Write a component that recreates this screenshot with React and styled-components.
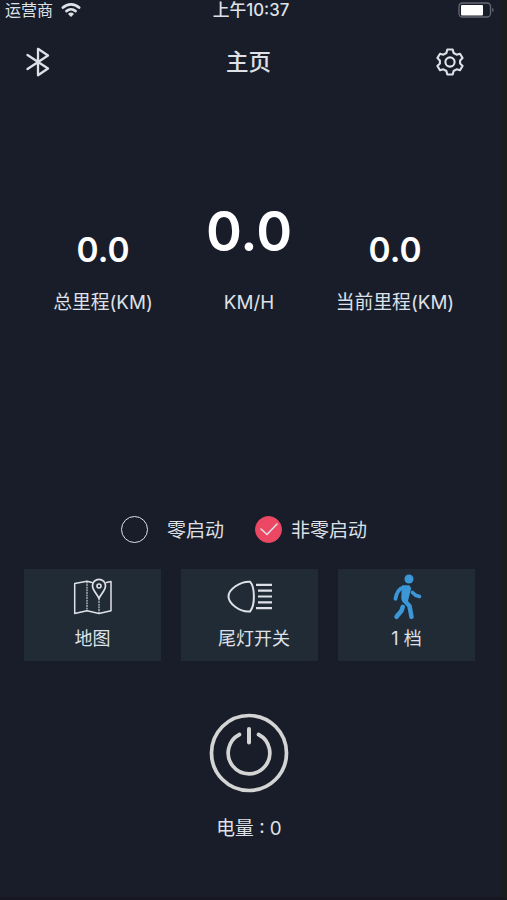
import React from "react";
import styled, { createGlobalStyle } from "styled-components";

const colors = {
  background: "#191d29",
  edge: "#1b1d1d",
  card: "#212b36",
  text: "#dfe1e8",
  white: "#ffffff",
  red: "#ec4863",
  blue: "#3b97d8",
};

const GlobalStyle = createGlobalStyle`
  * { box-sizing: border-box; }

  body {
    margin: 0;
    background-color: ${colors.background};
    color: ${colors.text};
    font-family: Inter, "Noto Sans CJK SC", sans-serif;
  }
`;

const Screen = styled.div`
  display: flex;
  flex-direction: column;
  width: 507px;
  height: 900px;
  overflow: hidden;
  border-right: 5px solid ${colors.edge};
  border-bottom: 3px solid #171623;

  svg {
    display: block;
    fill: none;
    stroke: ${colors.text};
    stroke-linecap: round;
    stroke-linejoin: round;
  }
`;

const StatusBar = styled.div`
  display: grid;
  grid-template-columns: 1fr auto 1fr;
  align-items: center;
  height: 20px;
  padding: 0 7px 0 5px;
  font-size: 16px;
  line-height: 20px;
`;

const Carrier = styled.div`
  display: flex;
  align-items: center;
  gap: 8px;
`;

const Time = styled.div`
  margin-right: -2px;
  font-size: 16.8px;
  font-weight: 500;
`;

const Battery = styled.div`
  justify-self: end;
`;

const Header = styled.header`
  display: grid;
  grid-template-columns: 1fr auto 1fr;
  align-items: center;
  height: 84px;
  padding: 0 38px 0 25px;
`;

const Title = styled.h1`
  margin: 0 -8px 0 0;
  font-size: 22.5px;
  font-weight: 500;
  line-height: 30px;
`;

const Settings = styled.div`
  justify-self: end;
`;

const Stats = styled.section`
  display: grid;
  grid-template-columns: 146px 146px 146px;
  align-items: end;
  height: 212px;
  padding-left: 30px;
`;

const Stat = styled.div`
  text-align: center;
`;

const Value = styled.div`
  margin-bottom: ${props => props.$large ? "25px" : "18px"};
  font-size: ${props => props.$large ? "54.5px" : "33.5px"};
  font-weight: 600;
  line-height: ${props => props.$large ? "68px" : "44px"};
  color: ${colors.white};
`;

const Label = styled.div`
  font-size: 18.8px;
  line-height: 26px;
  white-space: nowrap;
`;

const Modes = styled.div`
  display: flex;
  align-items: center;
  height: 30px;
  margin-top: 198px;
  padding-left: 121px;
`;

const Mode = styled.div`
  display: flex;
  align-items: center;
  gap: ${props => props.$gap};
  margin-right: 31px;
  font-size: 19px;
  line-height: 28px;
`;

const ModeName = styled.span`
  padding-top: 3px;
`;

const Radio = styled.span`
  display: flex;
  align-items: center;
  justify-content: center;
  width: 27px;
  height: 27px;
  border: 1.5px solid ${props => props.$checked ? colors.red : colors.text};
  border-radius: 50%;
  background-color: ${props => props.$checked ? colors.red : "transparent"};
`;

const Cards = styled.div`
  display: grid;
  grid-template-columns: repeat(3, 137px);
  gap: 20px;
  margin-top: 25px;
  padding-left: 24px;
`;

const Card = styled.div`
  display: flex;
  flex-direction: column;
  align-items: center;
  height: 92px;
  padding-top: 4px;
  background-color: ${colors.card};
  font-size: 18px;
  line-height: 26px;
`;

const CardIcon = styled.div`
  display: flex;
  align-items: center;
  height: 47px;
  margin-bottom: 6px;
`;

const CardLabel = styled.div`
  padding-left: ${props => props.$shift || "0"};
`;

const Power = styled.div`
  display: flex;
  flex-direction: column;
  align-items: center;
  width: 498px;
  margin-top: 52px;
`;

const Charge = styled.div`
  margin-top: 23px;
  font-size: 18.8px;
  line-height: 26px;
`;

const WifiIcon = () => (
  <svg width="20" height="16" viewBox="0 0 20 16" strokeWidth="2.9">
    <path d="M2 5.500a11.800 11.800 0 0 1 16 0M5.600 9a6.700 6.700 0 0 1 8.800 0" />
    <path d="M10 15l-3-3a4.300 4.300 0 0 1 6 0z" fill={colors.text} stroke="none" />
  </svg>
);

const BatteryIcon = () => (
  <svg width="37" height="16" viewBox="0 0 37 16">
    <rect x="1" y="1" width="31.500" height="14" rx="3.500" stroke="#666a75" strokeWidth="1.300" />
    <rect x="3" y="3" width="22" height="10.500" rx="1" fill={colors.white} stroke="none" />
    <path d="M34.400 5.700c1.600.7 1.600 3.900 0 4.600z" fill="#747782" stroke="none" />
  </svg>
);

const BluetoothIcon = () => (
  <svg width="26" height="30" viewBox="0 0 26 30" strokeWidth="2.300">
    <path d="M2.500 8l20.500 13.500-10 6.700V1.800l10 6.700L2.500 22" />
  </svg>
);

const GearIcon = () => (
  <svg width="28" height="28" viewBox="0 0 28 28" strokeWidth="2.100">
    <path d="M11.300 1.500h5.400l.9 3.500 3 1.700 3.400-1 2.600 4.400-2.500 2.400v3l2.500 2.400-2.600 4.400-3.400-1-3 1.700-.9 3.500h-5.400l-.9-3.500-3-1.700-3.400 1-2.600-4.400 2.500-2.400v-3L1.400 10.100 4 5.700l3.400 1 3-1.700z" />
    <circle cx="14" cy="14" r="4.600" />
  </svg>
);

const CheckIcon = () => (
  <svg width="20" height="16" viewBox="0 0 20 16" strokeWidth="1.600">
    <path d="M2 8l6 5.500L18 3" />
  </svg>
);

const MapIcon = () => (
  <svg width="40" height="38" viewBox="0 0 40 38" strokeWidth="1.500">
    <path d="M19 4.500L14 3.300 1.700 5.500V35.500L14 32.700l12 2.800 12-2.800V3.500l-4.500 1" />
    <path d="M14 4v28M26 21v14" strokeWidth="1.100" strokeDasharray="1 1.600" />
    <path d="M26 20.500c-1.500-4-6.500-8-6.500-12.700a6.500 6.500 0 0 1 13 0c0 4.700-5 8.700-6.500 12.700z" strokeWidth="1.700" />
    <circle cx="26" cy="8" r="2" strokeWidth="1.600" />
  </svg>
);

const LampIcon = () => (
  <svg width="46" height="34" viewBox="0 0 46 34">
    <path d="M23 1.700C13 1.200 1.500 9.500 1.500 16.500S13 32.500 23 31.500c5.200-6 5.200-24 0-29.800z" strokeWidth="2" />
    <path d="M29 4.800h16M31 10.700h14M31 16.500h14M31 22.300h14M29 28.200h16" strokeWidth="2.200" strokeLinecap="butt" />
  </svg>
);

const WalkIcon = () => (
  <svg width="32" height="46" viewBox="0 0 32 46" style={{ stroke: colors.blue }}>
    <circle cx="18" cy="5" r="4.500" fill={colors.blue} stroke="none" />
    <path d="M12.500 13h5l.8 1.500-3 12-2.800-.5-.5-2z" fill={colors.blue} strokeWidth="3.500" />
    <path d="M12 13.500c-4 1.500-6.500 4.500-7.500 11.300" strokeWidth="3.800" />
    <path d="M21.500 18.500l3 2.700 4 1.300" strokeWidth="3.600" />
    <path d="M13.500 26.500l5 5.500 2 10.800M11.800 32.800l-1.300 4-5 6" strokeWidth="4.500" />
  </svg>
);

const PowerIcon = () => (
  <svg width="80" height="80" viewBox="0 0 80 80" style={{ stroke: "#d3d4d3" }}>
    <circle cx="40" cy="40" r="37.500" strokeWidth="3.700" />
    <path d="M30.500 21.500a20.800 20.800 0 1 0 19 0" strokeWidth="3.700" />
    <path d="M40 16v13.500" strokeWidth="4" />
  </svg>
);

const App = () => (
  <Screen>
    <GlobalStyle />
    <StatusBar>
      <Carrier>运营商 <WifiIcon /></Carrier>
      <Time>上午10:37</Time>
      <Battery><BatteryIcon /></Battery>
    </StatusBar>
    <Header>
      <BluetoothIcon />
      <Title>主页</Title>
      <Settings><GearIcon /></Settings>
    </Header>
    <Stats>
      <Stat>
        <Value>0.0</Value>
        <Label>总里程(KM)</Label>
      </Stat>
      <Stat>
        <Value $large>0.0</Value>
        <Label>KM/H</Label>
      </Stat>
      <Stat>
        <Value>0.0</Value>
        <Label>当前里程(KM)</Label>
      </Stat>
    </Stats>
    <Modes>
      <Mode $gap="19px"><Radio /><ModeName>零启动</ModeName></Mode>
      <Mode $gap="9px"><Radio $checked><CheckIcon /></Radio><ModeName>非零启动</ModeName></Mode>
    </Modes>
    <Cards>
      <Card>
        <CardIcon><MapIcon /></CardIcon>
        <CardLabel>地图</CardLabel>
      </Card>
      <Card>
        <CardIcon><LampIcon /></CardIcon>
        <CardLabel $shift="9px">尾灯开关</CardLabel>
      </Card>
      <Card>
        <CardIcon><WalkIcon /></CardIcon>
        <CardLabel>1 档</CardLabel>
      </Card>
    </Cards>
    <Power>
      <PowerIcon />
      <Charge>电量 : 0</Charge>
    </Power>
  </Screen>
);

export default App;
